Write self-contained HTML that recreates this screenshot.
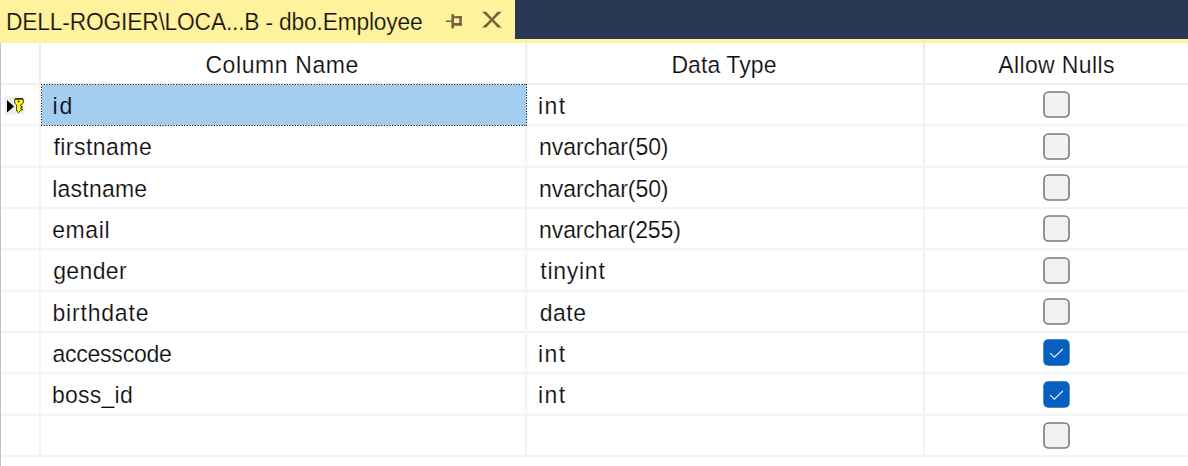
<!DOCTYPE html>
<html><head><meta charset="utf-8"><style>
html,body{margin:0;padding:0;width:1188px;height:466px;overflow:hidden;background:#fff}
body{position:relative;font-family:"Liberation Sans",sans-serif}
.t{position:absolute;line-height:1;white-space:pre}
</style></head><body>
<div style="position:absolute;left:0;top:0;width:515px;height:43px;background:#FFF29D"></div><div style="position:absolute;left:515px;top:0;width:673px;height:39px;background:#293955"></div><div style="position:absolute;left:0;top:39px;width:1188px;height:4px;background:#FFF29D"></div><div class="t" style="left:6px;top:11.20px;font-size:22.8px;letter-spacing:-0.191px;color:#111;transform:scaleY(1.02);transform-origin:0 19.30px;-webkit-text-stroke:0.2px #FFF29D;">DELL-ROGIER\LOCA...B - dbo.Employee</div>
<svg style="position:absolute;left:440px;top:8px" width="28" height="28" viewBox="0 0 28 28">
<g fill="#75633D"><rect x="5.9" y="12.5" width="5.8" height="1.5"/><rect x="11.4" y="6.1" width="2.6" height="14.3"/><rect x="14" y="8.1" width="7.8" height="2.2"/><rect x="19.2" y="8.1" width="2.6" height="9.7"/><rect x="14" y="15" width="7.8" height="2.8"/></g></svg><svg style="position:absolute;left:478px;top:8px" width="28" height="24" viewBox="0 0 28 24">
<path d="M4 3.7 H8.3 Q14.2 10.6 23.8 19.6 H19.5 Q13.8 12.6 4 3.7 Z M19.5 3.7 H23.8 Q14.2 12.6 8.3 19.6 H4 Q13.8 10.6 19.5 3.7 Z" fill="#75633D"/></svg><div style="position:absolute;left:0;top:43px;width:1px;height:423px;background:#B8C2DA"></div><svg style="position:absolute;left:0;top:0" width="1188" height="466" viewBox="0 0 1188 466"><rect x="38.80" y="43" width="2" height="41" fill="#ECECEC"/><rect x="38.80" y="84" width="2" height="372" fill="#F3F3F3"/><rect x="525.30" y="43" width="2" height="41" fill="#ECECEC"/><rect x="525.30" y="84" width="2" height="372" fill="#F3F3F3"/><rect x="922.95" y="43" width="2" height="41" fill="#ECECEC"/><rect x="922.95" y="84" width="2" height="372" fill="#F3F3F3"/><rect x="1" y="83.00" width="1187" height="2" fill="#EEEEEE"/><rect x="1" y="124.33" width="1187" height="2" fill="#F3F3F3"/><rect x="1" y="165.67" width="1187" height="2" fill="#F3F3F3"/><rect x="1" y="207.00" width="1187" height="2" fill="#F3F3F3"/><rect x="1" y="248.33" width="1187" height="2" fill="#F3F3F3"/><rect x="1" y="289.66" width="1187" height="2" fill="#F3F3F3"/><rect x="1" y="331.00" width="1187" height="2" fill="#F3F3F3"/><rect x="1" y="372.33" width="1187" height="2" fill="#F3F3F3"/><rect x="1" y="413.66" width="1187" height="2" fill="#F3F3F3"/><rect x="1" y="455.00" width="1187" height="2" fill="#F3F3F3"/></svg><div style="position:absolute;left:42px;top:85px;width:484px;height:40px;background:#A3CEF0"></div><svg style="position:absolute;left:0;top:0" width="1188" height="466" viewBox="0 0 1188 466">
<g stroke="#000" stroke-width="1" stroke-dasharray="1.1 1.6" fill="none">
<path d="M41 84.5 H527"/><path d="M41 125.5 H527"/><path d="M41.5 84 V126"/><path d="M526.5 84 V126"/></g></svg><div class="t" style="left:205.4px;top:53.83px;font-size:23px;letter-spacing:0.6px;color:#0a0a0a;transform:scaleY(1.022);transform-origin:0 19.47px;-webkit-text-stroke:0.2px #fff;">Column Name</div>
<div class="t" style="left:671.4px;top:53.83px;font-size:23px;letter-spacing:0.078px;color:#0a0a0a;transform:scaleY(1.022);transform-origin:0 19.47px;-webkit-text-stroke:0.2px #fff;">Data Type</div>
<div class="t" style="left:998.2px;top:53.83px;font-size:23px;letter-spacing:0.38px;color:#0a0a0a;transform:scaleY(1.022);transform-origin:0 19.47px;-webkit-text-stroke:0.2px #fff;">Allow Nulls</div>
<svg style="position:absolute;left:4px;top:96px" width="22" height="20" viewBox="0 0 22 20">
<rect x="0.5" y="0.5" width="20" height="18" fill="#EEEEEE"/>
<path d="M3 4 L10 10.5 L3 16.5 Z" fill="#000"/>
<path d="M10.7 4 Q10.7 2.7 12 2.7 L18 2.7 Q19.3 2.7 19.3 4 L19.3 6 Q19.3 8 17 8.6 L16.6 8.8 L16.6 10.2 L18.3 10.6 L18.3 11.6 L16.6 12 L16.6 12.6 L18.3 13 L18.3 14 L16.6 14.4 L14.6 16.8 L12.6 15 L12.6 8.8 Q10.7 8 10.7 6 Z" fill="#FFFF00" stroke="#2a2a00" stroke-width="0.9"/>
<path d="M11 3 H19" stroke="#2a2a00" stroke-width="1.4"/>
<circle cx="14.6" cy="5.4" r="0.9" fill="#000"/>
</svg><div class="t" style="left:52.6px;top:95.03px;font-size:23px;letter-spacing:1.8px;color:#0a0a0a;transform:scaleY(1.022);transform-origin:0 19.47px;-webkit-text-stroke:0.2px #A3CEF0;">id</div>
<div class="t" style="left:538.1px;top:95.03px;font-size:23px;letter-spacing:1.4px;color:#0a0a0a;transform:scaleY(1.022);transform-origin:0 19.47px;-webkit-text-stroke:0.2px #fff;">int</div>
<svg style="position:absolute;left:1043px;top:91.32px" width="27" height="27" viewBox="0 0 27 27">
<rect x="1" y="1" width="25" height="25" rx="4.5" fill="#F2F2F2" stroke="#7A7A7A" stroke-width="1.6"/></svg><div class="t" style="left:53.4px;top:136.36px;font-size:23px;letter-spacing:0.472px;color:#0a0a0a;transform:scaleY(1.022);transform-origin:0 19.47px;-webkit-text-stroke:0.2px #fff;">firstname</div>
<div class="t" style="left:539.1px;top:136.36px;font-size:23px;letter-spacing:-0.09px;color:#0a0a0a;transform:scaleY(1.022);transform-origin:0 19.47px;-webkit-text-stroke:0.2px #fff;">nvarchar(50)</div>
<svg style="position:absolute;left:1043px;top:132.65px" width="27" height="27" viewBox="0 0 27 27">
<rect x="1" y="1" width="25" height="25" rx="4.5" fill="#F2F2F2" stroke="#7A7A7A" stroke-width="1.6"/></svg><div class="t" style="left:52.2px;top:177.70px;font-size:23px;letter-spacing:0.23px;color:#0a0a0a;transform:scaleY(1.022);transform-origin:0 19.47px;-webkit-text-stroke:0.2px #fff;">lastname</div>
<div class="t" style="left:539.1px;top:177.70px;font-size:23px;letter-spacing:-0.09px;color:#0a0a0a;transform:scaleY(1.022);transform-origin:0 19.47px;-webkit-text-stroke:0.2px #fff;">nvarchar(50)</div>
<svg style="position:absolute;left:1043px;top:173.98px" width="27" height="27" viewBox="0 0 27 27">
<rect x="1" y="1" width="25" height="25" rx="4.5" fill="#F2F2F2" stroke="#7A7A7A" stroke-width="1.6"/></svg><div class="t" style="left:52.2px;top:219.03px;font-size:23px;letter-spacing:0.6px;color:#0a0a0a;transform:scaleY(1.022);transform-origin:0 19.47px;-webkit-text-stroke:0.2px #fff;">email</div>
<div class="t" style="left:539.1px;top:219.03px;font-size:23px;letter-spacing:-0.118px;color:#0a0a0a;transform:scaleY(1.022);transform-origin:0 19.47px;-webkit-text-stroke:0.2px #fff;">nvarchar(255)</div>
<svg style="position:absolute;left:1043px;top:215.32px" width="27" height="27" viewBox="0 0 27 27">
<rect x="1" y="1" width="25" height="25" rx="4.5" fill="#F2F2F2" stroke="#7A7A7A" stroke-width="1.6"/></svg><div class="t" style="left:53.2px;top:260.36px;font-size:23px;letter-spacing:0.36px;color:#0a0a0a;transform:scaleY(1.022);transform-origin:0 19.47px;-webkit-text-stroke:0.2px #fff;">gender</div>
<div class="t" style="left:540.3px;top:260.36px;font-size:23px;letter-spacing:0.735px;color:#0a0a0a;transform:scaleY(1.022);transform-origin:0 19.47px;-webkit-text-stroke:0.2px #fff;">tinyint</div>
<svg style="position:absolute;left:1043px;top:256.65px" width="27" height="27" viewBox="0 0 27 27">
<rect x="1" y="1" width="25" height="25" rx="4.5" fill="#F2F2F2" stroke="#7A7A7A" stroke-width="1.6"/></svg><div class="t" style="left:52.4px;top:301.70px;font-size:23px;letter-spacing:0.822px;color:#0a0a0a;transform:scaleY(1.022);transform-origin:0 19.47px;-webkit-text-stroke:0.2px #fff;">birthdate</div>
<div class="t" style="left:539.7px;top:301.70px;font-size:23px;letter-spacing:0.532px;color:#0a0a0a;transform:scaleY(1.022);transform-origin:0 19.47px;-webkit-text-stroke:0.2px #fff;">date</div>
<svg style="position:absolute;left:1043px;top:297.98px" width="27" height="27" viewBox="0 0 27 27">
<rect x="1" y="1" width="25" height="25" rx="4.5" fill="#F2F2F2" stroke="#7A7A7A" stroke-width="1.6"/></svg><div class="t" style="left:52.4px;top:343.03px;font-size:23px;letter-spacing:-0.223px;color:#0a0a0a;transform:scaleY(1.022);transform-origin:0 19.47px;-webkit-text-stroke:0.2px #fff;">accesscode</div>
<div class="t" style="left:538.1px;top:343.03px;font-size:23px;letter-spacing:1.4px;color:#0a0a0a;transform:scaleY(1.022);transform-origin:0 19.47px;-webkit-text-stroke:0.2px #fff;">int</div>
<svg style="position:absolute;left:1043px;top:339.31px" width="27" height="27" viewBox="0 0 27 27">
<rect x="0.3" y="0.3" width="26.4" height="26.4" rx="5" fill="#0560C0"/>
<path d="M7.2 14.2 L11.4 18.2 L19.8 10" stroke="#E6EEF8" stroke-width="1.15" fill="none"/></svg><div class="t" style="left:52.0px;top:384.36px;font-size:23px;letter-spacing:0.232px;color:#0a0a0a;transform:scaleY(1.022);transform-origin:0 19.47px;-webkit-text-stroke:0.2px #fff;">boss_id</div>
<div class="t" style="left:538.1px;top:384.36px;font-size:23px;letter-spacing:1.4px;color:#0a0a0a;transform:scaleY(1.022);transform-origin:0 19.47px;-webkit-text-stroke:0.2px #fff;">int</div>
<svg style="position:absolute;left:1043px;top:380.65px" width="27" height="27" viewBox="0 0 27 27">
<rect x="0.3" y="0.3" width="26.4" height="26.4" rx="5" fill="#0560C0"/>
<path d="M7.2 14.2 L11.4 18.2 L19.8 10" stroke="#E6EEF8" stroke-width="1.15" fill="none"/></svg><svg style="position:absolute;left:1043px;top:421.98px" width="27" height="27" viewBox="0 0 27 27">
<rect x="1" y="1" width="25" height="25" rx="4.5" fill="#F2F2F2" stroke="#7A7A7A" stroke-width="1.6"/></svg>
</body></html>
